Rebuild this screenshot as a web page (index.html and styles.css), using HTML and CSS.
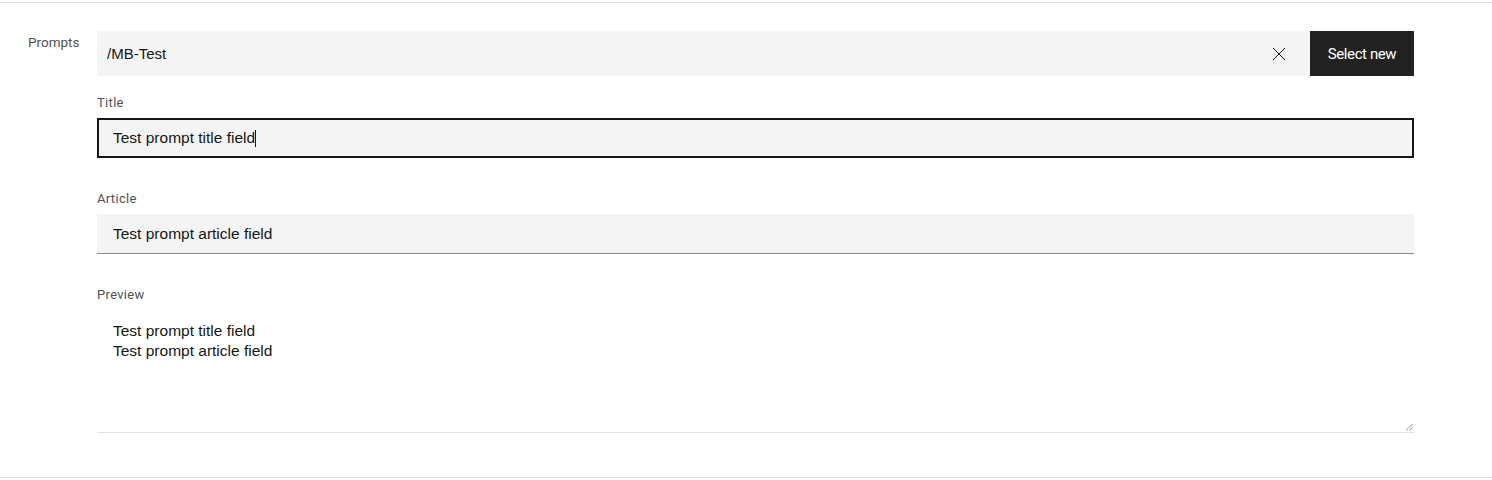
FILE: index.html
```html
<!DOCTYPE html>
<html lang="en">

<head>
    <meta charset="UTF-8">
    <meta name="viewport" content="width=device-width, initial-scale=1.0">
    <title>Prompts</title>
    <link rel="stylesheet" href="styles.css">
</head>

<body>
    <div class="panel">
        <div class="row">
            <div class="rowlabel">Prompts</div>
            <div class="fields">
                <div class="picker">
                    <div class="picked">
                        <span class="pickedname">/MB-Test</span>
                        <button class="clear" aria-label="Clear">
                            <svg width="16" height="16" viewBox="0 0 16 16">
                                <path d="M2 2 L14 14 M14 2 L2 14" stroke="#161616" stroke-width="1" fill="none" />
                            </svg>
                        </button>
                    </div>
                    <button class="selectnew">Select new</button>
                </div>

                <div class="field">
                    <label class="fieldlabel">Title</label>
                    <div class="input focused">Test prompt title field<span class="caret"></span></div>
                </div>

                <div class="field">
                    <label class="fieldlabel">Article</label>
                    <div class="input">Test prompt article field</div>
                </div>

                <div class="field">
                    <label class="fieldlabel">Preview</label>
                    <div class="preview">
                        <div>Test prompt title field</div>
                        <div>Test prompt article field</div>
                        <svg class="grip" width="8" height="8" viewBox="0 0 8 8">
                            <path d="M7.5 1 L1 7.5 M7.5 4.5 L4.5 7.5" stroke="#8d8d8d" stroke-width="1" fill="none" />
                        </svg>
                    </div>
                </div>
            </div>
        </div>
    </div>
</body>

</html>
```

FILE: styles.css
```css
body {
    margin: 0;
    background-color: white;
    font-family: "Liberation Sans", Arial, sans-serif;
    color: #161616;
}

.panel {
    margin-top: 2px;
    border-top: 1px solid #e0e0e0;
    border-bottom: 1px solid #e0e0e0;
    height: 476px;
    box-sizing: border-box;
}

.row {
    display: flex;
    padding-top: 28px;
}

.rowlabel {
    width: 69px;
    padding-left: 28px;
    padding-top: 3px;
    font-family: Roboto, sans-serif;
    font-size: 13.5px;
    color: #525252;
}

.fields {
    width: 1317px;
}

.picker {
    display: flex;
    height: 45px;
}

.picked {
    flex: 1;
    display: flex;
    align-items: center;
    justify-content: space-between;
    background-color: #f4f4f4;
    padding-left: 10px;
    padding-right: 23px;
}

.pickedname {
    font-size: 15px;
}

.clear {
    border: none;
    background: none;
    padding: 0;
    display: flex;
}

.selectnew {
    width: 104px;
    border: none;
    background-color: #222222;
    color: white;
    font-family: Roboto, sans-serif;
    font-size: 15px;
    letter-spacing: -0.4px;
}

.field {
    margin-top: 19px;
}

.field + .field {
    margin-top: 33px;
}

.fieldlabel {
    display: block;
    font-family: Roboto, sans-serif;
    font-size: 13px;
    line-height: 15px;
    letter-spacing: 0.32px;
    color: #525252;
    margin-bottom: 8px;
}

.input {
    height: 40px;
    box-sizing: border-box;
    background-color: #f4f4f4;
    border-bottom: 1px solid #8d8d8d;
    padding: 0 16px;
    display: flex;
    align-items: center;
    font-size: 15.5px;
}

.input.focused {
    border: 2px solid #161616;
    padding: 0 14px;
}

.caret {
    display: inline-block;
    width: 1px;
    height: 17px;
    background-color: #161616;
}

.preview {
    position: relative;
    height: 123px;
    box-sizing: border-box;
    border-bottom: 1px solid #e0e0e0;
    padding: 11px 16px;
    font-size: 15.5px;
    line-height: 20px;
}

.grip {
    position: absolute;
    right: 1px;
    bottom: 1px;
}
```
